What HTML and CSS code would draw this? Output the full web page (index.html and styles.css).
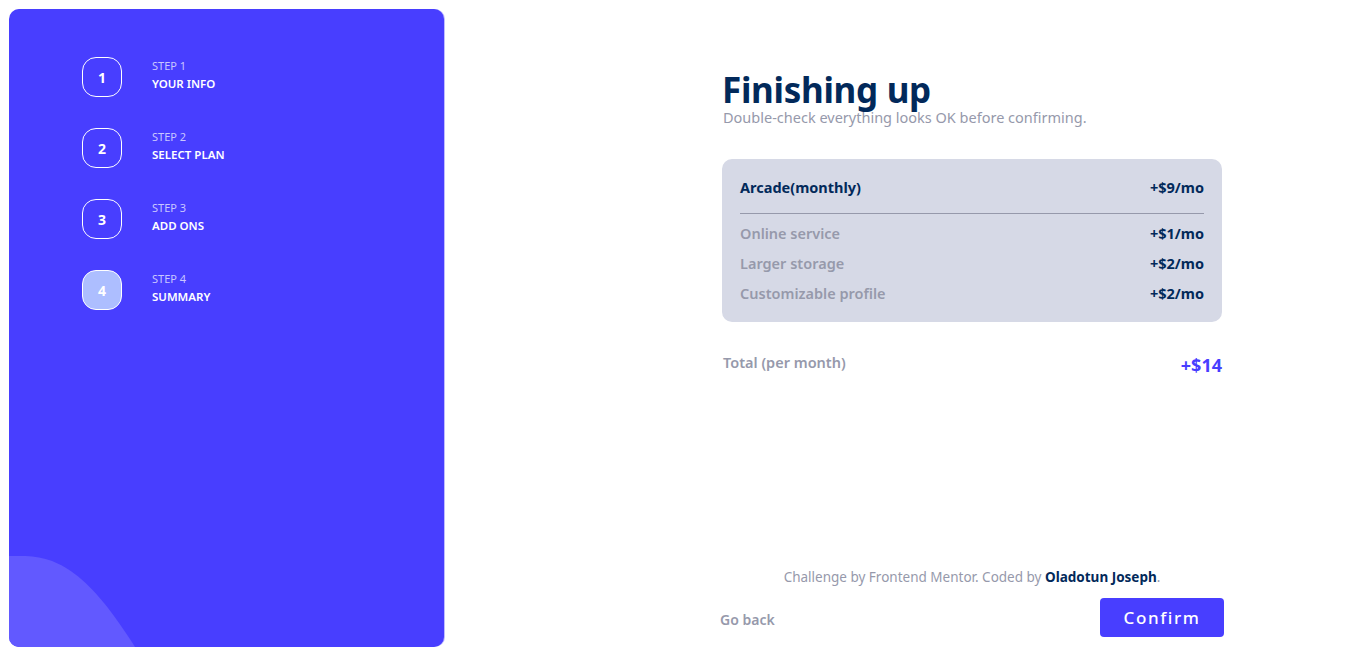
FILE: index.html
```html
<!DOCTYPE html>
<html lang="en">
<head>
<meta charset="utf-8">
<title>Finishing up</title>
<link rel="stylesheet" href="styles.css">
</head>
<body>
<div class="app">
  <aside class="sidebar">
    <ol class="steps">
      <li class="step">
        <span class="num">1</span>
        <div class="step-text"><span class="step-label">STEP 1</span><span class="step-name">YOUR INFO</span></div>
      </li>
      <li class="step">
        <span class="num">2</span>
        <div class="step-text"><span class="step-label">STEP 2</span><span class="step-name">SELECT PLAN</span></div>
      </li>
      <li class="step">
        <span class="num">3</span>
        <div class="step-text"><span class="step-label">STEP 3</span><span class="step-name">ADD ONS</span></div>
      </li>
      <li class="step">
        <span class="num active">4</span>
        <div class="step-text"><span class="step-label">STEP 4</span><span class="step-name">SUMMARY</span></div>
      </li>
    </ol>
    <svg class="curve" width="435" height="638" viewBox="0 0 435 638" aria-hidden="true">
      <path d="M0 547 H13 C50 547 80 565 126 638 H0 Z" fill="#6259ff"/>
    </svg>
  </aside>
  <main class="main">
    <div class="content">
      <h1 class="title">Finishing up</h1>
      <p class="subtitle">Double-check everything looks OK before confirming.</p>
      <section class="card">
        <div class="row plan">
          <span class="plan-name">Arcade(monthly)</span>
          <span class="price">+$9/mo</span>
        </div>
        <hr class="divider">
        <div class="addons">
          <div class="row"><span class="addon">Online service</span><span class="price">+$1/mo</span></div>
          <div class="row"><span class="addon">Larger storage</span><span class="price">+$2/mo</span></div>
          <div class="row"><span class="addon">Customizable profile</span><span class="price">+$2/mo</span></div>
        </div>
      </section>
      <div class="total">
        <span class="total-label">Total (per month)</span>
        <span class="total-price">+$14</span>
      </div>
    </div>
    <div class="bottom">
      <p class="attribution">Challenge by Frontend Mentor. Coded by <a href="#">Oladotun Joseph</a>.</p>
      <div class="actions">
        <button class="back" type="button">Go back</button>
        <button class="confirm" type="button">Confirm</button>
      </div>
    </div>
  </main>
</div>
</body>
</html>
```
FILE: styles.css
```css
* { box-sizing: border-box; }
html, body { margin: 0; padding: 0; background: #fff; }
body {
  font-family: "Noto Sans", "Open Sans", sans-serif;
  padding: 9px;
  color: #02295a;
}
.app {
  display: flex;
  height: 638px;
}
.sidebar {
  position: relative;
  width: 435px;
  height: 638px;
  flex: none;
  background: #483eff;
  border-radius: 10px;
  overflow: hidden;
  box-shadow: 1px 0 0 rgba(72, 62, 255, 0.35);
}
.curve {
  position: absolute;
  left: 0;
  top: 0;
}
.steps {
  list-style: none;
  margin: 0;
  padding: 48px 0 0 73px;
  display: flex;
  flex-direction: column;
  gap: 31px;
  position: relative;
  z-index: 1;
}
.step {
  display: flex;
  align-items: center;
}
.num {
  width: 40px;
  height: 40px;
  border: 1px solid #fff;
  border-radius: 14px;
  display: flex;
  align-items: center;
  justify-content: center;
  color: #fff;
  font-weight: 700;
  font-size: 14px;
}
.num.active {
  background: #adbeff;
}
.step-text {
  margin-left: 30px;
  margin-top: -3px;
  display: flex;
  flex-direction: column;
  gap: 3px;
}
.step-label {
  font-size: 11px;
  line-height: 14px;
  color: #c9c6ff;
}
.step-name {
  font-size: 11.5px;
  line-height: 16px;
  font-weight: 600;
  color: #fff;
}
.main {
  flex: 1;
  display: flex;
  flex-direction: column;
  justify-content: space-between;
  padding: 0 0 10px 0;
}
.content {
  margin-left: 278px;
  width: 500px;
  padding-top: 63px;
}
.title {
  margin: 0;
  font-size: 35px;
  line-height: 35px;
  font-weight: 700;
  color: #02295a;
  letter-spacing: -0.3px;
}
.subtitle {
  margin: 2px 0 0 1px;
  font-size: 14.5px;
  line-height: 16px;
  color: #9699ab;
}
.card {
  margin-top: 34px;
  background: #d6d9e6;
  border-radius: 10px;
  padding: 18px 18px 19px 18px;
}
.row {
  display: flex;
  justify-content: space-between;
  align-items: center;
  font-size: 14.5px;
  line-height: 20px;
}
.plan-name {
  font-weight: 700;
  color: #02295a;
}
.price {
  font-weight: 700;
  color: #02295a;
}
.divider {
  border: 0;
  height: 1px;
  background: #9699ab;
  margin: 16px 0 9px 0;
}
.addons {
  display: flex;
  flex-direction: column;
  gap: 10px;
}
.addon {
  font-weight: 600;
  color: #9699ab;
}
.total {
  margin-top: 30px;
  display: flex;
  justify-content: space-between;
  align-items: flex-start;
  padding-left: 1px;
}
.total-label {
  font-size: 14.5px;
  line-height: 20px;
  font-weight: 600;
  color: #9699ab;
}
.total-price {
  font-size: 18px;
  line-height: 22px;
  margin-top: 2px;
  font-weight: 700;
  color: #483eff;
}
.bottom {
  margin-left: 276px;
  width: 504px;
}
.attribution {
  margin: 0 0 12px 0;
  text-align: center;
  font-size: 13.5px;
  line-height: 18px;
  color: #9699ab;
}
.attribution a {
  color: #02295a;
  font-weight: 700;
  text-decoration: none;
}
.actions {
  display: flex;
  justify-content: space-between;
  align-items: center;
}
.back {
  border: 0;
  background: none;
  padding: 3px 0 0 0;
  font-family: inherit;
  font-size: 14px;
  font-weight: 600;
  color: #9699ab;
}
.confirm {
  width: 124px;
  height: 39px;
  border: 0;
  border-radius: 4px;
  background: #483eff;
  color: #fff;
  font-family: inherit;
  font-size: 17px;
  font-weight: 500;
  letter-spacing: 1.6px;
  padding: 0;
}
```
